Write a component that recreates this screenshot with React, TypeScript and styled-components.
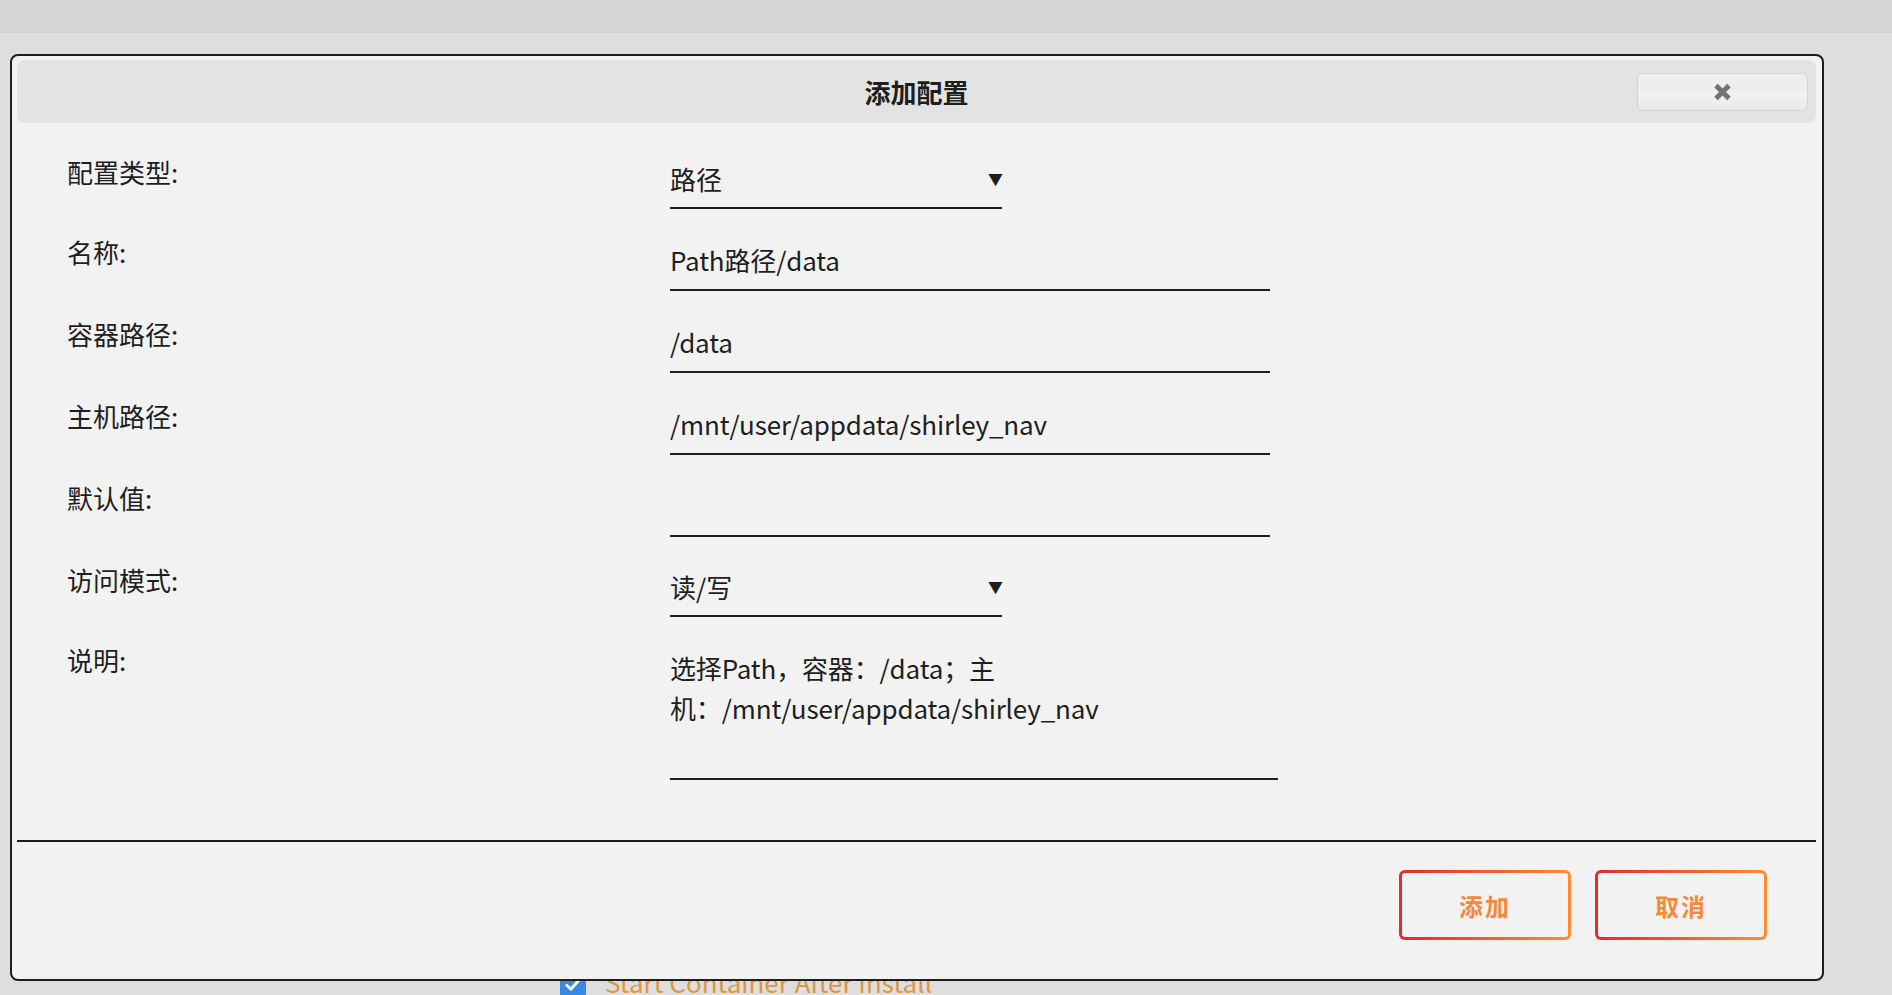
import React from "react";
import styled, { createGlobalStyle } from "styled-components";

const GlobalStyle = createGlobalStyle`
  html, body {
    margin: 0;
    padding: 0;
    background: #dedede;
    font-family: "Noto Sans CJK SC", "Noto Sans", sans-serif;
    color: #1e1e1e;
  }
  * {
    box-sizing: border-box;
  }
`;

const Page = styled.div`
  position: relative;
  height: 995px;
  overflow: hidden;
`;

const TopBar = styled.div`
  height: 33px;
  background: #d6d6d6;
  border-bottom: 1px solid #d2d2d2;
`;

const Content = styled.div`
  padding: 932px 0 0 560px;
`;

const CheckRow = styled.label`
  display: flex;
  align-items: flex-start;
  gap: 19px;
  font-size: 26px;
  line-height: 34px;
  color: #e0963b;
`;

const CheckBox = styled.span`
  width: 26px;
  height: 26px;
  margin-top: 6px;
  border-radius: 3px;
  background: #3789e6;
  display: flex;
  align-items: center;
  justify-content: center;
`;

const Dialog = styled.div`
  position: absolute;
  top: 54px;
  left: 10px;
  width: 1814px;
  background: #f2f2f2;
  border: 2px solid #1e1e1e;
  border-radius: 8px;
  padding: 4px 6px 4px 5px;
  display: flex;
  flex-direction: column;
`;

const Header = styled.div`
  height: 63px;
  background: #e3e3e3;
  border-radius: 8px;
  display: grid;
  grid-template-columns: 1fr auto 1fr;
  align-items: center;
`;

const Title = styled.h2`
  grid-column: 2;
  margin: 0;
  font-size: 26px;
  font-weight: 700;
  color: #1e1e1e;
`;

const CloseButton = styled.button`
  grid-column: 3;
  justify-self: end;
  margin-right: 8px;
  width: 171px;
  height: 38px;
  border: 1px solid #d3d3d3;
  border-radius: 6px;
  background: linear-gradient(to bottom, #efefef 0%, #ededed 48%, #f3f3f3 50%, #e8e8e8 100%);
  display: flex;
  align-items: center;
  justify-content: center;
  cursor: pointer;
`;

const Form = styled.div`
  display: flex;
  flex-direction: column;
  gap: 23px;
  padding: 29px 0 0 50px;
`;

const Row = styled.div`
  display: grid;
  grid-template-columns: 603px 1fr;
  align-items: start;
`;

const Label = styled.div`
  font-size: 26px;
  line-height: 40px;
  color: #1e1e1e;
`;

const SelectBox = styled.div`
  margin-top: 8px;
  width: 332px;
  display: flex;
  align-items: center;
  padding-bottom: 7px;
  border-bottom: 2px solid #1e1e1e;
`;

const Select = styled.select`
  flex: 1;
  height: 40px;
  appearance: none;
  border: none;
  outline: none;
  background: transparent;
  padding: 0 0 4px 0;
  font-family: inherit;
  font-size: 26px;
  color: #1e1e1e;
`;

const Arrow = styled.span`
  font-size: 15px;
  line-height: 1;
  margin: 0 -1px 3px 0;
  pointer-events: none;
  color: #1e1e1e;
`;

const Input = styled.input`
  margin-top: 7px;
  width: 600px;
  height: 52px;
  line-height: 40px;
  padding: 0 0 10px 0;
  border: none;
  border-bottom: 2px solid #1e1e1e;
  outline: none;
  background: transparent;
  font-family: inherit;
  font-size: 26px;
  letter-spacing: -0.15px;
  color: #1e1e1e;
`;

const TextArea = styled.textarea`
  margin-top: 8px;
  width: 608px;
  height: 132px;
  line-height: 40px;
  padding: 0 0 10px 0;
  border: none;
  border-bottom: 2px solid #1e1e1e;
  outline: none;
  resize: none;
  overflow: hidden;
  background: transparent;
  font-family: inherit;
  font-size: 26px;
  letter-spacing: -0.15px;
  color: #1e1e1e;
`;

const Divider = styled.hr`
  margin: 60px 0 0 0;
  border: none;
  border-top: 2px solid #1e1e1e;
`;

const ButtonRow = styled.div`
  display: flex;
  justify-content: flex-end;
  gap: 24px;
  padding: 28px 49px 35px 0;
`;

const ActionButton = styled.button`
  width: 172px;
  height: 70px;
  border: 3px solid transparent;
  border-radius: 6px;
  background: linear-gradient(#f2f2f2, #f2f2f2) padding-box,
    linear-gradient(90deg, #e22b2b, #ff8c2f) border-box;
  font-family: inherit;
  font-size: 24px;
  font-weight: 700;
  letter-spacing: 2px;
  color: #f6883a;
  cursor: pointer;
`;

type Field =
  | { kind: "select"; label: string; value: string; options: string[] }
  | { kind: "input"; label: string; value: string }
  | { kind: "textarea"; label: string; value: string };

const fields: Field[] = [
  { kind: "select", label: "配置类型:", value: "路径", options: ["路径", "端口", "变量", "设备", "标签"] },
  { kind: "input", label: "名称:", value: "Path路径/data" },
  { kind: "input", label: "容器路径:", value: "/data" },
  { kind: "input", label: "主机路径:", value: "/mnt/user/appdata/shirley_nav" },
  { kind: "input", label: "默认值:", value: "" },
  { kind: "select", label: "访问模式:", value: "读/写", options: ["读/写", "只读"] },
  { kind: "textarea", label: "说明:", value: "选择Path，容器：/data；主机：/mnt/user/appdata/shirley_nav" },
];

function CloseIcon() {
  return (
    <svg width="19" height="18" viewBox="0 0 19 18">
      <path d="M3 2.5 L16 15.5 M16 2.5 L3 15.5" stroke="#727272" strokeWidth="5" strokeLinecap="butt" />
    </svg>
  );
}

function FieldControl({ field }: { field: Field }) {
  if (field.kind === "select") {
    return (
      <SelectBox>
        <Select defaultValue={field.value}>
          {field.options.map(o => (
            <option key={o} value={o}>{o}</option>
          ))}
        </Select>
        <Arrow>▼</Arrow>
      </SelectBox>
    );
  }
  if (field.kind === "textarea") {
    return <TextArea rows={3} defaultValue={field.value} />;
  }
  return <Input type="text" defaultValue={field.value} />;
}

export default function App() {
  return (
    <>
      <GlobalStyle />
      <Page>
        <TopBar />
        <Content>
          <CheckRow>
            <CheckBox>
              <svg width="18" height="14" viewBox="0 0 18 14">
                <path d="M2 7.5 L7 12 L16 2" stroke="#fff" strokeWidth="3" fill="none" />
              </svg>
            </CheckBox>
            Start Container After Install
          </CheckRow>
        </Content>

        <Dialog>
          <Header>
            <Title>添加配置</Title>
            <CloseButton type="button" aria-label="close">
              <CloseIcon />
            </CloseButton>
          </Header>
          <Form>
            {fields.map(field => (
              <Row key={field.label}>
                <Label>{field.label}</Label>
                <FieldControl field={field} />
              </Row>
            ))}
          </Form>
          <Divider />
          <ButtonRow>
            <ActionButton type="button">添加</ActionButton>
            <ActionButton type="button">取消</ActionButton>
          </ButtonRow>
        </Dialog>
      </Page>
    </>
  );
}
